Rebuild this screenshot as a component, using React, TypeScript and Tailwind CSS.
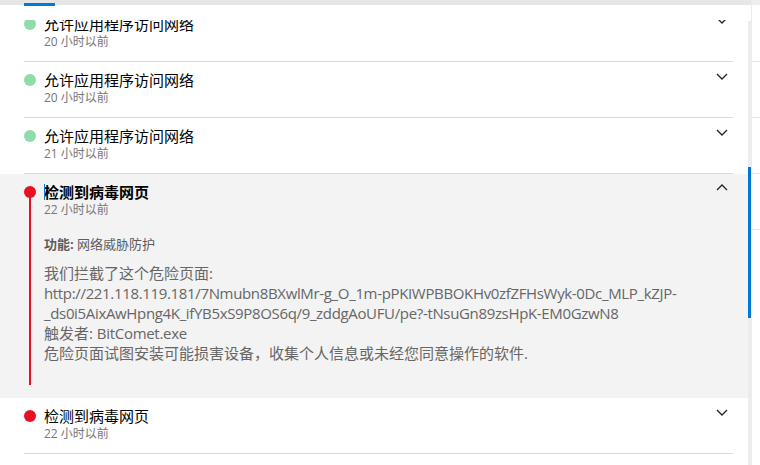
type Entry = {
  title: string;
  time: string;
  tone: "ok" | "bad";
};

const before: Entry[] = [
  { title: "允许应用程序访问网络", time: "20 小时以前", tone: "ok" },
  { title: "允许应用程序访问网络", time: "20 小时以前", tone: "ok" },
  { title: "允许应用程序访问网络", time: "21 小时以前", tone: "ok" },
];

const after: Entry[] = [{ title: "检测到病毒网页", time: "22 小时以前", tone: "bad" }];

const font = "font-['Open_Sans','Noto_Sans_CJK_SC',sans-serif]";

function Chevron({ up }: { up?: boolean }) {
  return (
    <svg width="12" height="7" viewBox="0 0 12 7" fill="none" className="shrink-0">
      <polyline
        points={up ? "1,6 6,1 11,6" : "1,1 6,6 11,1"}
        stroke="#222"
        strokeWidth="1.3"
      />
    </svg>
  );
}

function Row({ item }: { item: Entry }) {
  return (
    <div className="pl-[24px] pr-[15px]">
      <div className="flex border-b border-[#d9d9d9] pt-[8px] pb-[11px] pr-[5px]">
        <span
          className={
            item.tone === "ok"
              ? "mt-[4px] h-[12px] w-[12px] shrink-0 rounded-full bg-[#8fdcaa]"
              : "mt-[4px] h-[12px] w-[12px] shrink-0 rounded-full bg-[#e81123]"
          }
        />
        <div className="ml-[8px] flex-1">
          <p className="text-[15px] leading-[20px] text-black">{item.title}</p>
          <p className="text-[12px] leading-[16px] text-[#767676]">{item.time}</p>
        </div>
        <div className="pt-[3px]">
          <Chevron />
        </div>
      </div>
    </div>
  );
}

function Expanded() {
  return (
    <div className="flex bg-[#f3f3f3] pl-[24px] pr-[20px] pt-[8px] pb-[13px]">
      <div className="flex w-[12px] shrink-0 flex-col items-center">
        <span className="mt-[4px] h-[12px] w-[12px] rounded-full bg-[#e81123]" />
        <span className="-mt-px h-[188px] w-[2px] bg-[#e81123]" />
      </div>
      <div className="ml-[8px] flex-1">
        <div className="flex">
          <p className="flex-1 text-[15px] leading-[20px] font-bold text-black">
            <span className="mr-[-1px] inline-block h-[16px] w-px translate-y-[2px] bg-[#0078d7]" />
            检测到病毒网页
          </p>
          <div className="pt-[2px]">
            <Chevron up />
          </div>
        </div>
        <p className="text-[12px] leading-[16px] text-[#767676]">22 小时以前</p>
        <p className="mt-[17px] text-[13px] leading-[18px] text-[#5c5c5c]">
          <span className="font-bold">功能:</span> 网络威胁防护
        </p>
        <div className="mt-[10px] whitespace-nowrap text-[15px] leading-[20px] text-[#666]">
          <p>我们拦截了这个危险页面:</p>
          <p className="tracking-[-0.34px]">
            http://221.118.119.181/7Nmubn8BXwlMr-g_O_1m-pPKIWPBBOKHv0zfZFHsWyk-0Dc_MLP_kZJP-
          </p>
          <p className="tracking-[-0.34px]">
            _ds0i5AixAwHpng4K_ifYB5xS9P8OS6q/9_zddgAoUFU/pe?-tNsuGn89zsHpK-EM0GzwN8
          </p>
          <p>
            触发者: <span className="tracking-[-0.3px]">BitComet.exe</span>
          </p>
          <p>危险页面试图安装可能损害设备，收集个人信息或未经您同意操作的软件.</p>
        </div>
      </div>
    </div>
  );
}

export default function App() {
  return (
    <div className={`flex h-[465px] w-[760px] overflow-hidden bg-white ${font}`}>
      <div className="flex w-[751px] flex-col">
        <div className="h-[5px] bg-[#e6e6e6]">
          <div className="ml-[24px] mt-[3px] h-[3px] w-[31px] bg-[#0078d7]" />
        </div>
        <div className="flex min-h-0 flex-1">
          <div className="flex min-h-0 w-[748px] flex-col">
            <div className="h-[15px] shrink-0" />
            <div className="min-h-0 flex-1 overflow-hidden">
              <div className="-mt-[14px]">
                {before.map((item, i) => (
                  <Row key={i} item={item} />
                ))}
                <Expanded />
                {after.map((item, i) => (
                  <Row key={i} item={item} />
                ))}
              </div>
            </div>
          </div>
          <div className="flex w-[3px] flex-col pt-[16px]">
            <div className="h-[146px] bg-[#ececec]" />
            <div className="h-[151px] bg-[#0078d7]" />
            <div className="flex-1 bg-[#ececec]" />
          </div>
        </div>
      </div>
      <div className="w-px bg-[#ececec]" />
      <div className="flex flex-1 flex-col">
        <div className="h-[5px] bg-[#eeeeef]" />
        <div className="h-[57px] border-b border-[#e6e6e6]" />
        <div className="h-[56px] border-b border-[#e6e6e6]" />
        <div className="h-[56px] border-b border-[#e6e6e6]" />
        <div className="h-[56px] border-b border-[#e6e6e6]" />
      </div>
    </div>
  );
}
